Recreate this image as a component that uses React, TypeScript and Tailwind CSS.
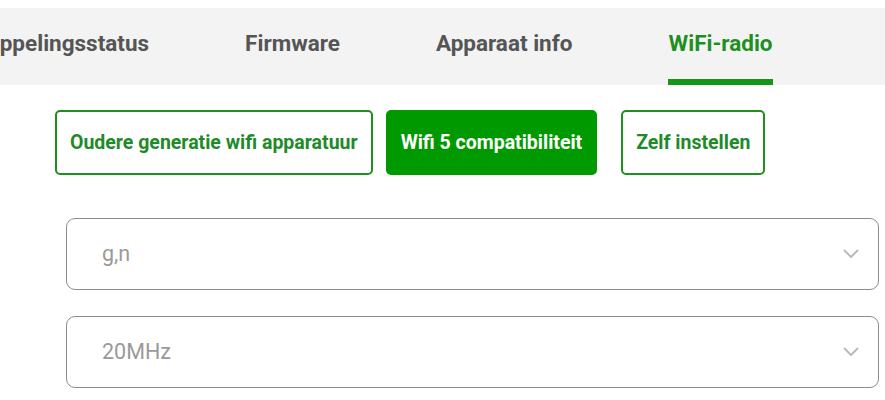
import React from 'react';

const tabs = ['Koppelingsstatus', 'Firmware', 'Apparaat info', 'WiFi-radio'];
const modes = [
  { label: 'Oudere generatie wifi apparatuur', active: false },
  { label: 'Wifi 5 compatibiliteit', active: true },
  { label: 'Zelf instellen', active: false },
];
const selects = ['g,n', '20MHz'];

function Chevron() {
  return (
    <svg width="16" height="10" viewBox="0 0 16 10" fill="none">
      <path d="M1.5 1.5 L8 8 L14.5 1.5" stroke="#b8b8b8" strokeWidth="1.8" strokeLinecap="round" strokeLinejoin="round" />
    </svg>
  );
}

export default function App() {
  return (
    <div className="w-[885px] h-[400px] bg-white overflow-hidden pt-2" style={{ fontFamily: 'Roboto, "Noto Sans", sans-serif' }}>
      {/* Tabs */}
      <div className="h-[77px] bg-[#f3f3f3] flex items-stretch gap-[96px] -ml-[27px]">
        {tabs.map((t, i) => {
          const active = i === tabs.length - 1;
          return (
            <div key={t} className="relative flex items-center pb-[6px]">
              <span className={`text-[22.5px] font-bold whitespace-nowrap ${active ? 'text-[#1f8f1f]' : 'text-[#555555]'}`}>{t}</span>
              {active && <div className="absolute left-0 right-0 bottom-0 h-[6px] bg-[#169616]" />}
            </div>
          );
        })}
      </div>

      {/* Mode buttons */}
      <div className="flex gap-[13px] pl-[55px] pt-[25px]">
        {modes.map((m, i) => (
          <button
            key={m.label}
            className={`h-[65px] rounded-[5px] px-[13px] text-[19.5px] font-bold whitespace-nowrap ${i === 2 ? 'ml-[11px]' : ''} ${
              m.active ? 'bg-[#009900] text-white border-2 border-[#009900]' : 'bg-white text-[#1f8a2a] border-2 border-[#1f8f1f]'
            }`}
          >
            {m.label}
          </button>
        ))}
      </div>

      {/* Selects */}
      <div className="flex flex-col gap-[26px] pl-[66px] pr-[6px] pt-[43px]">
        {selects.map((s) => (
          <div key={s} className="h-[72px] border border-[#8c8c8c] rounded-[9px] flex items-center justify-between pl-[35px] pr-[19px]">
            <span className="text-[21.5px] text-[#9a9a9a]">{s}</span>
            <Chevron />
          </div>
        ))}
      </div>
    </div>
  );
}
